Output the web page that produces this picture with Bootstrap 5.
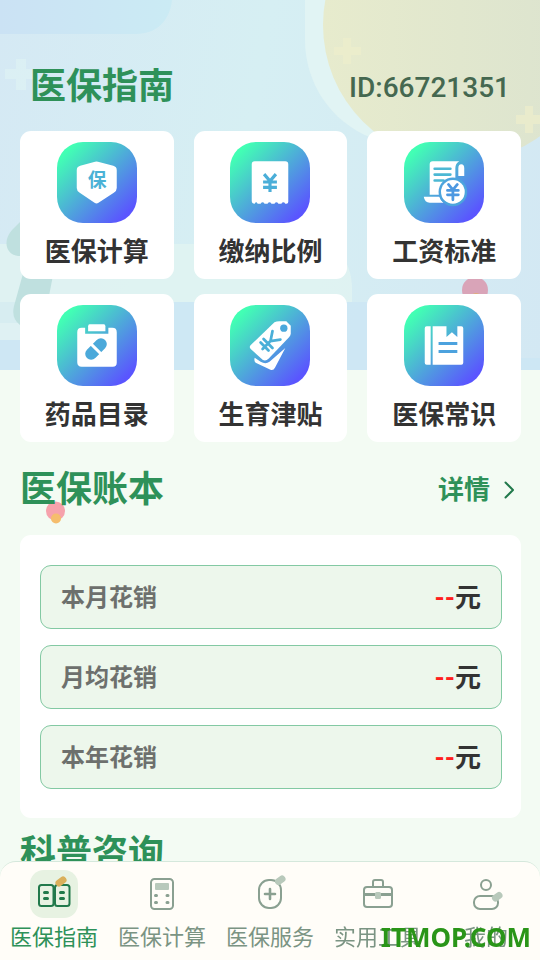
<!DOCTYPE html>
<html lang="zh-CN">
<head>
<meta charset="utf-8">
<meta name="viewport" content="width=device-width, initial-scale=1">
<title>医保指南</title>
<link href="https://cdn.jsdelivr.net/npm/bootstrap@5.3.0/dist/css/bootstrap.min.css" rel="stylesheet">
<style>
  body { font-family: Roboto, "Noto Sans CJK SC", sans-serif; background: #f3fbf3; color: #333; }
  .screen { height: 100vh; overflow-y: auto; scrollbar-width: none; }
  .screen::-webkit-scrollbar { display: none; }
  .backdrop { height: 370px; width: 100%; background: linear-gradient(100deg, #d5e9f4, #d6eff3 45%, #d3e8f3); }
  .content { padding: 0 19px 120px 20px; }
  .top-bar { height: 131px; padding: 42px 11px 0 10px; }
  .heading { font-size: 36px; line-height: 48px; font-weight: 700; color: #2e9159; }
  .user-id { font-size: 28px; line-height: 40px; padding-top: 2px; font-weight: 500; color: #456850; }
  .tiles { display: grid; grid-template-columns: repeat(3, 1fr); gap: 15px 20px; }
  .tile { padding: 11px 0 9px; border-radius: 11px; color: #333; font-size: 26px; line-height: 36px; font-weight: 700; }
  .tile-icon { width: 80px; height: 81px; border-radius: 26px; margin-bottom: 11px; background: linear-gradient(135deg, #42ffb4 12%, #5a55ff 88%); }
  .section-bar { height: 93px; padding: 2px 7px 0 0; }
  .more { font-size: 26px; line-height: 36px; font-weight: 700; color: #2e9159; gap: 14px; }
  .ledger { padding: 30px 19px 29px 20px; border-radius: 11px; gap: 16px; }
  .entry { height: 64px; padding: 2px 20px 0; border: 1px solid #83c9a3; border-radius: 11px; background: #edf7ec; font-size: 24px; font-weight: 700; color: #6d706d; }
  .amount { font-size: 26px; color: #333; }
  .amount b { color: #ff1f1f; font-weight: 700; }
  .next-heading { padding-top: 12px; }
  .tabs { height: 99px; padding-top: 8px; background: #fffdf8; border-top: 1px solid #d5e8dc; border-radius: 16px 16px 0 0; }
  .tab { color: #7b9483; font-size: 22px; line-height: 40px; white-space: nowrap; }
  .tab.active { color: #2e9159; }
  .tab svg { width: 48px; height: 48px; border-radius: 14px; stroke: #8aa091; stroke-width: 2; fill: none; }
  .tab.active svg { background: #e7f2e2; stroke: #21794b; }
  .tab .soft { fill: #b8c9bb; stroke: none; }
  .tab .pen { stroke: #b8c9bb; stroke-width: 7; stroke-linecap: round; }
  .tab.active .pen { stroke: #dab05b; }
  .petal { left: 45px; top: 501px; width: 20px; height: 23px; }
  .stamp { right: 9px; bottom: 5px; font: bold 26px/36px "Noto Sans", "Open Sans", sans-serif; color: #2a9518; z-index: 1040; }
</style>
</head>
<body>
<div class="screen position-relative">
  <svg class="backdrop position-absolute top-0 start-0" viewBox="0 0 540 370" preserveAspectRatio="none" aria-hidden="true">
    <defs>
      <linearGradient id="sun" x1="0" x2="1"><stop offset="0" stop-color="#e7ebcd"/><stop offset="1" stop-color="#dbe3cf"/></linearGradient>
      <linearGradient id="pane" x1="0" x2="1"><stop offset="0" stop-color="#cbe2f4"/><stop offset="1" stop-color="#cbebf4"/></linearGradient>
    </defs>
    <path d="M0 0H172C170 20 157 34 136 34H0Z" fill="url(#pane)"/>
    <path d="M20 302H440V358H540V370H0V340H20Z" fill="#cce6f4" opacity=".8"/>
    <path d="M0 244H318Q352 250 352 290V302H0Z" fill="#e1f4f2" opacity=".75"/>
    <path d="M0 302H60V323H0Z" fill="#d7edf1"/>
    <path d="M0 323H20V340H0Z" fill="#dff1f3"/>
    <path d="M305 0V40C305 82 330 122 372 138H470V0Z" fill="#e1f4f4"/>
    <circle cx="460" cy="25" r="137" fill="url(#sun)"/>
    <path d="M16 59h10v10h11v10H26v11H16V79H5V69H16Z" fill="#e0f3f3" opacity=".6"/>
    <path d="M343 38h8v9h10v8h-10v9h-8v-9h-9v-8h9Z M525 106h8v9h10v9h-10v9h-8v-9h-9v-9h9Z" fill="#eeeecb" opacity=".65"/>
    <path d="M20 222L40 205V256H18C5 254 3 240 12 230Z M24 270H54L44 322Q35 332 20 325Q11 318 14 306Z" fill="#bfe0df"/>
    <circle cx="475" cy="290" r="13" fill="#d9a4b8"/><circle cx="476" cy="299" r="6" fill="#e0ae78"/>
  </svg>
  <svg class="petal position-absolute" viewBox="0 0 20 23" aria-hidden="true"><circle cx="10.500" cy="10" r="9.500" fill="#f6a2ac"/><circle cx="11" cy="17.500" r="5" fill="#f5bd6d"/></svg>

  <main class="content position-relative">
    <header class="top-bar d-flex justify-content-between align-items-center">
      <h1 class="heading m-0">医保指南</h1>
      <span class="user-id">ID:66721351</span>
    </header>

    <nav class="tiles" aria-label="服务">
      <a href="#" class="tile bg-white d-flex flex-column align-items-center text-decoration-none">
        <svg class="tile-icon" viewBox="0 0 81 81" aria-hidden="true"><path d="M38.500 19.500Q40 19 41.500 19.500L57 23.500Q60.500 24.500 60.500 28V46Q60.500 49 57.500 51L42 61Q40 62.500 38 61L23 51Q20 49 20 46V28Q20 24.500 23.500 23.500Z" fill="#fff"/><text x="40.500" y="45" text-anchor="middle" font-size="19" font-weight="700" fill="#4bb2d6">保</text></svg>
        <span>医保计算</span>
      </a>
      <a href="#" class="tile bg-white d-flex flex-column align-items-center text-decoration-none">
        <svg class="tile-icon" viewBox="0 0 81 81" aria-hidden="true"><path d="M25 19H56Q59 19 59 22V60Q59 62 57 62H56Q54 59 52 62H49Q47 59 45 62H42Q40 59 38 62H35Q33 59 31 62H28Q26.500 59 25 62Q22 62 22 59V22Q22 19 25 19Z" fill="#fff"/><path d="M34.500 32L40.500 39L46.500 32M33.500 40H47.500M33.500 45.500H47.500M40.500 39V50" fill="none" stroke="#4baed8" stroke-width="3.200"/></svg>
        <span>缴纳比例</span>
      </a>
      <a href="#" class="tile bg-white d-flex flex-column align-items-center text-decoration-none">
        <svg class="tile-icon" viewBox="0 0 81 81" aria-hidden="true"><path d="M29 19H56Q52 21 52 26V53H26V22Q26 19 29 19Z" fill="#fff"/><path d="M55 34V26Q55 22 58 22T61 26V34Z" fill="#fff"/><path d="M20 55H36Q37 59 40 61H26Q21 61 20 55Z" fill="#fff"/><path d="M31 26.500H47M31 32.500H47M31 38.500H40" stroke="#4cb8d4" stroke-width="2.600" stroke-linecap="round"/><circle cx="49.500" cy="50" r="14.500" fill="#4ca4dd"/><circle cx="49.500" cy="50" r="12" fill="#fff"/><path d="M45 42.500L49.500 48L54 42.500M44 48.500H55M44 53H55M49.500 48V58" fill="none" stroke="#4c98e1" stroke-width="2.800" stroke-linecap="round"/></svg>
        <span>工资标准</span>
      </a>
      <a href="#" class="tile bg-white d-flex flex-column align-items-center text-decoration-none">
        <svg class="tile-icon" viewBox="0 0 81 81" aria-hidden="true"><path d="M25 22.500H28.500V28.500H52V22.500H56Q60.500 22.500 60.500 27V58Q60.500 62 56.500 62H25Q20.500 62 20.500 57.500V27Q20.500 22.500 25 22.500Z" fill="#fff"/><path d="M33 19H47.500Q49 19 49 21V26H31.500V21Q31.500 19 33 19Z" fill="#fff"/><g transform="rotate(-45 39.500 44)"><rect x="26.500" y="38" width="26" height="12" rx="6" fill="#4ba9da"/><path d="M39.500 36V52" stroke="#fff" stroke-width="3"/></g></svg>
        <span>药品目录</span>
      </a>
      <a href="#" class="tile bg-white d-flex flex-column align-items-center text-decoration-none">
        <svg class="tile-icon" viewBox="0 0 81 81" aria-hidden="true"><path d="M45 17Q47 16 50 16H57L61.500 20.500V28Q61.500 30 60 32L39 54Q36 57 33 55L21 44Q19 42 21 40Z" fill="#fff"/><circle cx="54.500" cy="23" r="3.700" fill="#4aa8dc"/><path d="M56 43L45.500 63Q44 66 41 65L26 58Q24 56 25 53L31 57Q36 60 40 57Z" fill="#fff"/><path d="M43 26L41 36L51 34.500M41 36L33 44M34 34L43 43M31 37.500L39 45.500" fill="none" stroke="#4aafd8" stroke-width="2.800" stroke-linecap="round"/></svg>
        <span>生育津贴</span>
      </a>
      <a href="#" class="tile bg-white d-flex flex-column align-items-center text-decoration-none">
        <svg class="tile-icon" viewBox="0 0 81 81" aria-hidden="true"><path d="M23 21H27V60H23Q21 60 21 58V23Q21 21 23 21ZM29 21H43V32L48.500 27L54 32V21H58Q60 21 60 23V58Q60 60 58 60H29Z" fill="#fff"/><path d="M35 38.500H54M35 46.500H54" stroke="#4ca2de" stroke-width="3"/></svg>
        <span>医保常识</span>
      </a>
    </nav>

    <div class="section-bar d-flex justify-content-between align-items-center">
      <h2 class="heading m-0">医保账本</h2>
      <a href="#" class="more d-flex align-items-center text-decoration-none">详情
        <svg width="10" height="18" viewBox="0 0 10 18" fill="none" stroke="#21794b" stroke-width="2" stroke-linecap="round" stroke-linejoin="round" aria-hidden="true"><path d="M1.500 1.500L9 9L1.500 16.500"/></svg></a>
    </div>

    <section class="ledger bg-white d-flex flex-column">
      <div class="entry d-flex justify-content-between align-items-center"><span>本月花销</span><span class="amount"><b>--</b>元</span></div>
      <div class="entry d-flex justify-content-between align-items-center"><span>月均花销</span><span class="amount"><b>--</b>元</span></div>
      <div class="entry d-flex justify-content-between align-items-center"><span>本年花销</span><span class="amount"><b>--</b>元</span></div>
    </section>

    <h2 class="heading next-heading m-0">科普咨询</h2>
  </main>
</div>

<nav class="tabs fixed-bottom d-flex" aria-label="主导航">
  <a href="#" class="tab active col d-flex flex-column align-items-center text-decoration-none" aria-current="page">
    <svg viewBox="0 0 48 48" aria-hidden="true"><rect x="9" y="15" width="14.500" height="21" rx="2.500"/><rect x="25" y="15" width="14.500" height="21" rx="2.500"/><path d="M14.500 22.500H17.500M14.500 28.500H17.500M30.500 22.500H33.500M30.500 28.500H33.500" stroke-width="3" stroke-linecap="round"/><path class="pen" d="M29 13L33 10"/></svg>
    医保指南</a>
  <a href="#" class="tab col d-flex flex-column align-items-center text-decoration-none">
    <svg viewBox="0 0 48 48" aria-hidden="true"><rect x="13" y="9" width="22" height="30" rx="3.500"/><rect class="soft" x="17" y="13" width="14" height="7" rx="1"/><path d="M17.500 25.500H18.500M29 25.500H30M17.500 32.500H18.500M29 32.500H30" stroke-width="3" stroke-linecap="round"/></svg>
    医保计算</a>
  <a href="#" class="tab col d-flex flex-column align-items-center text-decoration-none">
    <svg viewBox="0 0 48 48" aria-hidden="true"><rect x="13" y="10" width="22" height="28" rx="10"/><path d="M24 19V29M19 24H29" stroke-width="2.600" stroke-linecap="round"/><path class="pen" d="M32.500 11.500L36 9"/></svg>
    医保服务</a>
  <a href="#" class="tab col d-flex flex-column align-items-center text-decoration-none">
    <svg viewBox="0 0 48 48" aria-hidden="true"><rect x="10" y="17" width="28" height="20" rx="3"/><path d="M19 17V12Q19 10 21 10H27Q29 10 29 12V17"/><path d="M10 24.500H38" stroke-width="3"/><rect class="soft" x="21" y="22" width="6" height="7" rx="1.500"/></svg>
    实用工具</a>
  <a href="#" class="tab col d-flex flex-column align-items-center text-decoration-none">
    <svg viewBox="0 0 48 48" aria-hidden="true"><circle cx="24" cy="15" r="5"/><rect x="12" y="26" width="24" height="13" rx="6"/><path class="pen" d="M33.500 28L37 25.500"/></svg>
    我的</a>
</nav>
<div class="stamp position-fixed">ITMOP.COM</div>
<script src="https://cdn.jsdelivr.net/npm/bootstrap@5.3.0/dist/js/bootstrap.bundle.min.js"></script>
</body>
</html>
